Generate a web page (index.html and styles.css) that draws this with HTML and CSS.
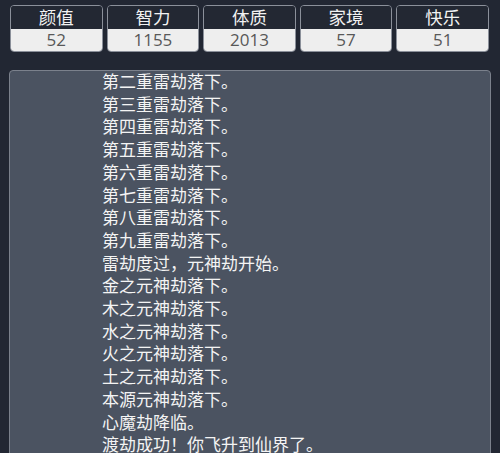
FILE: index.html
```html
<!DOCTYPE html>
<html lang="zh">
<head>
<meta charset="utf-8">
<link rel="stylesheet" href="styles.css">
</head>
<body>
<div class="stats">
  <div class="stat"><div class="label">颜值</div><div class="value">52</div></div>
  <div class="stat"><div class="label">智力</div><div class="value">1155</div></div>
  <div class="stat"><div class="label">体质</div><div class="value">2013</div></div>
  <div class="stat"><div class="label">家境</div><div class="value">57</div></div>
  <div class="stat"><div class="label">快乐</div><div class="value">51</div></div>
</div>
<div class="panel">
  <ul class="log">
    <li>第二重雷劫落下。</li>
    <li>第三重雷劫落下。</li>
    <li>第四重雷劫落下。</li>
    <li>第五重雷劫落下。</li>
    <li>第六重雷劫落下。</li>
    <li>第七重雷劫落下。</li>
    <li>第八重雷劫落下。</li>
    <li>第九重雷劫落下。</li>
    <li>雷劫度过，元神劫开始。</li>
    <li>金之元神劫落下。</li>
    <li>木之元神劫落下。</li>
    <li>水之元神劫落下。</li>
    <li>火之元神劫落下。</li>
    <li>土之元神劫落下。</li>
    <li>本源元神劫落下。</li>
    <li>心魔劫降临。</li>
    <li>渡劫成功！你飞升到仙界了。</li>
  </ul>
</div>
</body>
</html>
```
FILE: styles.css
```css
html, body {
  margin: 0;
  padding: 0;
  background: #222733;
  height: 453px;
  overflow: hidden;
  font-family: "Open Sans", "Noto Sans CJK SC", sans-serif;
}
.stats {
  display: grid;
  grid-template-columns: repeat(5, 1fr);
  gap: 4px;
  padding: 5px 11px 0 10px;
}
.stat {
  border: 1px solid #8b909a;
  border-radius: 4px;
  overflow: hidden;
  text-align: center;
}
.label {
  background: #232833;
  color: #f2f2f2;
  font-size: 17.5px;
  line-height: 23px;
  height: 23px;
}
.value {
  background: #eeeeee;
  color: #585858;
  font-size: 17px;
  line-height: 22px;
  height: 22px;
}
.panel {
  margin: 18px 9px 0 9px;
  height: 420px;
  background: #4b5361;
  border: 1px solid #7b818c;
  border-radius: 4px;
  overflow: hidden;
}
.log {
  list-style: none;
  margin: 0;
  padding: 0 0 0 92px;
  color: #f4f4f4;
  font-size: 17px;
  line-height: 22.7px;
}
```
